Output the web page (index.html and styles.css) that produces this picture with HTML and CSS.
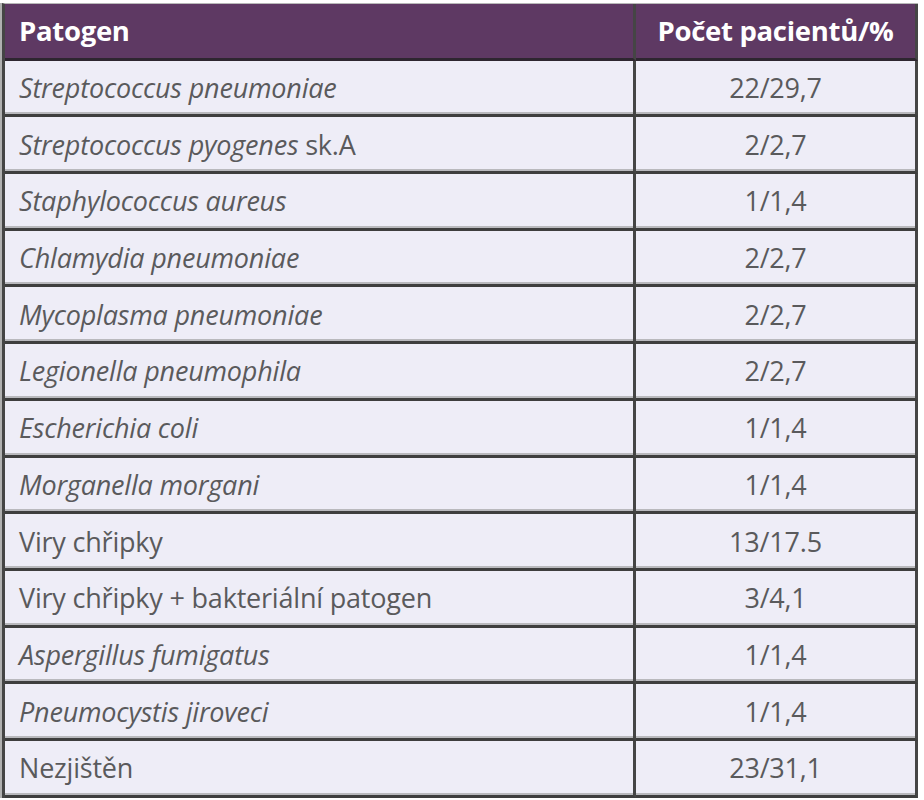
FILE: index.html
```html
<!DOCTYPE html>
<html lang="cs">
<head>
<meta charset="utf-8">
<link rel="stylesheet" href="styles.css">
</head>
<body>
<table class="tbl">
  <thead>
    <tr><th class="c1">Patogen</th><th class="c2">Počet pacientů/%</th></tr>
  </thead>
  <tbody>
    <tr><td class="c1"><i>Streptococcus pneumoniae</i></td><td class="c2">22/29,7</td></tr>
    <tr><td class="c1"><i>Streptococcus pyogenes</i> sk.A</td><td class="c2">2/2,7</td></tr>
    <tr><td class="c1"><i>Staphylococcus aureus</i></td><td class="c2">1/1,4</td></tr>
    <tr><td class="c1"><i>Chlamydia pneumoniae</i></td><td class="c2">2/2,7</td></tr>
    <tr><td class="c1"><i>Mycoplasma pneumoniae</i></td><td class="c2">2/2,7</td></tr>
    <tr><td class="c1"><i>Legionella pneumophila</i></td><td class="c2">2/2,7</td></tr>
    <tr><td class="c1"><i>Escherichia coli</i></td><td class="c2">1/1,4</td></tr>
    <tr><td class="c1"><i>Morganella morgani</i></td><td class="c2">1/1,4</td></tr>
    <tr><td class="c1">Viry chřipky</td><td class="c2">13/17.5</td></tr>
    <tr><td class="c1">Viry chřipky + bakteriální patogen</td><td class="c2">3/4,1</td></tr>
    <tr><td class="c1"><i>Aspergillus fumigatus</i></td><td class="c2">1/1,4</td></tr>
    <tr><td class="c1"><i>Pneumocystis jiroveci</i></td><td class="c2">1/1,4</td></tr>
    <tr><td class="c1">Nezjištěn</td><td class="c2">23/31,1</td></tr>
  </tbody>
</table>
</body>
</html>
```

FILE: styles.css
```css
html, body {
  margin: 0;
  padding: 0;
  background: #ffffff;
}
body {
  padding: 3px 0 0 2px;
  font-family: "Open Sans", "Liberation Sans", sans-serif;
}
.tbl {
  width: 916px;
  table-layout: fixed;
  border-collapse: separate;
  border-spacing: 0;
  border-top: 1px solid #b8b8b8;
  border-left: 3px solid #454545;
  box-shadow: -2px 0 0 #b0b0b0;
}
.tbl th, .tbl td {
  height: 53.7px;
  padding: 0;
  border-right: 3px solid #454545;
  border-bottom: 3px solid #3e3e3e;
  box-shadow: inset 0 -2px 0 #b9b9bd;
  vertical-align: middle;
  white-space: nowrap;
}
.tbl th {
  background: #5e3963;
  color: #ffffff;
  font-weight: 700;
  font-size: 27.5px;
  letter-spacing: -0.3px;
  box-shadow: none;
  border-bottom-color: #2e2630;
}
.tbl td {
  background: #eeedf7;
  color: #5a5a5c;
  font-size: 27px;
  font-weight: 400;
  letter-spacing: -0.2px;
}
.tbl i {
  font-style: italic;
}
.c1 {
  width: 614px;
  text-align: left;
  padding-left: 14px !important;
}
.c2 {
  text-align: center;
}
```
